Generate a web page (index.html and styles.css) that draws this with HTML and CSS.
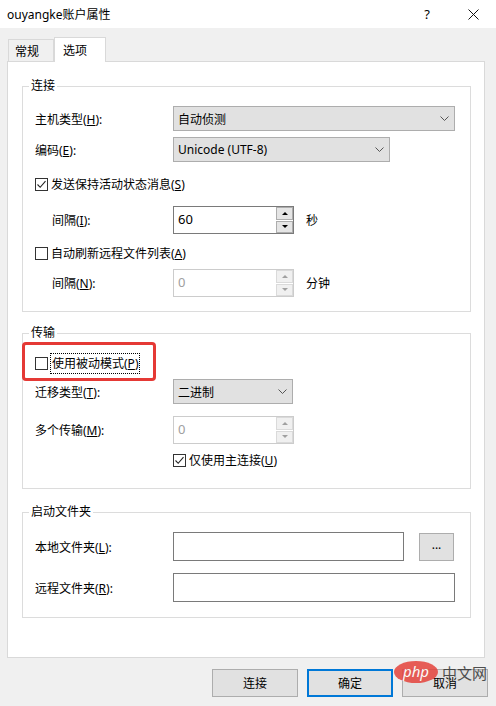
FILE: index.html
```html
<!DOCTYPE html>
<html lang="zh-CN">
<head>
  <meta charset="UTF-8" />
  <title>ouyangke账户属性</title>
  <link rel="stylesheet" href="styles.css">
</head>
<body>

<div class="titlebar">
  <span class="title">ouyangke账户属性</span>
  <span class="help">?</span>
  <span class="close">
    <svg width="11" height="11" viewBox="0 0 11 11"><path d="M0.5 0.5 L10.5 10.5 M10.5 0.5 L0.5 10.5" stroke="#111" stroke-width="1" fill="none"/></svg>
  </span>
</div>

<div class="dialog">
  <div class="tabs">
    <div class="tab">常规</div>
    <div class="tab active">选项</div>
  </div>

  <div class="panel">

    <fieldset class="group">
      <legend>连接</legend>

      <div class="row gap-l">
        <span class="lbl">主机类型(<u>H</u>):</span>
        <div class="select wide">
          <span>自动侦测</span>
          <svg class="chev" width="9" height="5" viewBox="0 0 9 5"><path d="M0.5 0.5 L4.5 4.5 L8.5 0.5" stroke="#555" fill="none"/></svg>
        </div>
      </div>

      <div class="row gap-s">
        <span class="lbl">编码(<u>E</u>):</span>
        <div class="select mid">
          <span>Unicode (UTF-8)</span>
          <svg class="chev" width="9" height="5" viewBox="0 0 9 5"><path d="M0.5 0.5 L4.5 4.5 L8.5 0.5" stroke="#555" fill="none"/></svg>
        </div>
      </div>

      <div class="row gap-l">
        <span class="check">
          <span class="box"><svg width="11" height="11" viewBox="0 0 11 11"><path d="M1.5 5.5 L4.2 8.3 L9.5 2.2" stroke="#222" stroke-width="1.1" fill="none"/></svg></span>
          <span>发送保持活动状态消息(<u>S</u>)</span>
        </span>
      </div>

      <div class="row indent gap-l">
        <span class="lbl">间隔(<u>I</u>):</span>
        <div class="spin">
          <span class="val">60</span>
          <span class="arrows">
            <span class="arr"><i class="up"></i></span>
            <span class="arr"><i class="down"></i></span>
          </span>
        </div>
        <span class="unit">秒</span>
      </div>

      <div class="row gap-m">
        <span class="check">
          <span class="box"></span>
          <span>自动刷新远程文件列表(<u>A</u>)</span>
        </span>
      </div>

      <div class="row indent gap-s">
        <span class="lbl">间隔(<u>N</u>):</span>
        <div class="spin off">
          <span class="val">0</span>
          <span class="arrows">
            <span class="arr"><i class="up"></i></span>
            <span class="arr"><i class="down"></i></span>
          </span>
        </div>
        <span class="unit">分钟</span>
      </div>
    </fieldset>

    <fieldset class="group transfer">
      <legend>传输</legend>

      <div class="row gap-l">
        <span class="check mark">
          <span class="box"></span>
          <span class="focus">使用被动模式(<u>P</u>)</span>
        </span>
      </div>

      <div class="row gap-s">
        <span class="lbl">迁移类型(<u>T</u>):</span>
        <div class="select short">
          <span>二进制</span>
          <svg class="chev" width="9" height="5" viewBox="0 0 9 5"><path d="M0.5 0.5 L4.5 4.5 L8.5 0.5" stroke="#555" fill="none"/></svg>
        </div>
      </div>

      <div class="row gap-l">
        <span class="lbl">多个传输(<u>M</u>):</span>
        <div class="spin off">
          <span class="val">0</span>
          <span class="arrows">
            <span class="arr"><i class="up"></i></span>
            <span class="arr"><i class="down"></i></span>
          </span>
        </div>
      </div>

      <div class="row gap-s">
        <span class="check push">
          <span class="box"><svg width="11" height="11" viewBox="0 0 11 11"><path d="M1.5 5.5 L4.2 8.3 L9.5 2.2" stroke="#222" stroke-width="1.1" fill="none"/></svg></span>
          <span>仅使用主连接(<u>U</u>)</span>
        </span>
      </div>
    </fieldset>

    <fieldset class="group startup">
      <legend>启动文件夹</legend>

      <div class="row gap-l">
        <span class="lbl">本地文件夹(<u>L</u>):</span>
        <div class="field local"></div>
        <button class="browse">...</button>
      </div>

      <div class="row gap-l">
        <span class="lbl">远程文件夹(<u>R</u>):</span>
        <div class="field remote"></div>
      </div>
    </fieldset>

  </div>

  <div class="actions">
    <button class="btn">连接</button>
    <button class="btn default">确定</button>
    <button class="btn">取消</button>
  </div>
</div>

<div class="watermark">
  <span class="php">php</span>
  <span class="cn">中文网</span>
</div>

</body>
</html>
```

FILE: styles.css
```css
body {
  margin: 0;
  width: 496px;
  height: 706px;
  overflow: hidden;
  background: #f0f0f0;
  color: #000;
  font-family: "Noto Sans", "Noto Sans CJK SC", sans-serif;
  font-size: 12px;
  position: relative;
}
u {
  text-decoration: underline;
  text-underline-offset: 1px;
}

/* title bar */
.titlebar {
  height: 28px;
  background: #fff;
  display: flex;
  align-items: center;
}
.title {
  flex: 1;
  padding-left: 7px;
  font-size: 12px;
}
.help {
  width: 46px;
  text-align: center;
  font-size: 13px;
}
.close {
  width: 46px;
  height: 28px;
  display: flex;
  align-items: center;
  justify-content: center;
}

/* tabs */
.tabs {
  height: 33px;
  display: flex;
  align-items: flex-end;
  padding-left: 8px;
}
.tab {
  height: 22px;
  box-sizing: border-box;
  border: 1px solid #d9d9d9;
  border-bottom: none;
  padding: 2px 0 0 6px;
  width: 46px;
  background: #f0f0f0;
}
.tab.active {
  height: 25px;
  width: 52px;
  margin-bottom: -1px;
  background: #fff;
  padding: 3px 0 0 8px;
  position: relative;
  z-index: 1;
}

/* main panel */
.panel {
  height: 597px;
  box-sizing: border-box;
  margin: 0 11px 0 7px;
  background: #fff;
  border: 1px solid #d9d9d9;
  padding-top: 16px;
}
.group {
  margin: 0 13px 0 14px;
  padding: 0 12px 14px;
  border: 1px solid #dcdcdc;
  min-width: 0;
}
.group legend {
  line-height: 16px;
  padding: 0 2px;
  margin-left: -6px;
}
.group.transfer {
  margin-top: 13px;
  padding-bottom: 18px;
}
.group.startup {
  margin-top: 15px;
  padding-bottom: 15px;
}

.row {
  display: flex;
  align-items: center;
}
.gap-s { margin-top: 6px; }
.gap-m { margin-top: 9px; }
.gap-l { margin-top: 12px; }

.lbl {
  width: 138px;
  flex: none;
}
.indent .lbl {
  margin-left: 17px;
  width: 121px;
}

/* checkboxes */
.check {
  display: flex;
  align-items: center;
  gap: 3px;
  height: 20px;
  position: relative;
}
.check.push {
  margin-left: 138px;
}
.box {
  width: 13px;
  height: 13px;
  box-sizing: border-box;
  border: 1px solid #333;
  background: #fff;
  display: flex;
  align-items: center;
  justify-content: center;
}
.focus {
  outline: 1px dotted #000;
  padding: 1px 1px;
  line-height: 17px;
}
.check.mark::after {
  content: "";
  position: absolute;
  left: -13px;
  top: -11px;
  width: 134px;
  height: 39px;
  box-sizing: border-box;
  border: 3px solid #e53935;
  border-radius: 4px;
}

/* dropdowns */
.select {
  height: 25px;
  box-sizing: border-box;
  border: 1px solid #adadad;
  background: #e1e1e1;
  display: flex;
  align-items: center;
  justify-content: space-between;
  padding: 0 5px 0 4px;
}
.select.wide { width: 282px; }
.select.mid { width: 217px; }
.select.short { width: 120px; }

/* spin boxes */
.spin {
  width: 121px;
  height: 28px;
  box-sizing: border-box;
  border: 1px solid #7a7a7a;
  background: #fff;
  display: flex;
  justify-content: space-between;
}
.spin .val {
  padding: 3px 0 0 4px;
  font-size: 13px;
}
.arrows {
  width: 17px;
  display: flex;
  flex-direction: column;
  gap: 1px;
  padding: 0;
}
.arr {
  flex: 1;
  border: 1px solid #adadad;
  background: #e5e5e5;
  display: flex;
  align-items: center;
  justify-content: center;
}
.arr i {
  width: 0;
  height: 0;
  border-left: 3px solid transparent;
  border-right: 3px solid transparent;
}
.arr .up { border-bottom: 3px solid #000; }
.arr .down { border-top: 3px solid #000; }

.spin.off {
  border-color: #cccccc;
}
.spin.off .val {
  color: #a0a0a0;
}
.spin.off .arr {
  border-color: #dadada;
  background: #f0f0f0;
}
.spin.off .up { border-bottom-color: #a0a0a0; }
.spin.off .down { border-top-color: #a0a0a0; }

.unit {
  margin-left: 12px;
}

/* folder inputs */
.field {
  height: 29px;
  box-sizing: border-box;
  border: 1px solid #7a7a7a;
  background: #fff;
}
.field.local { width: 231px; }
.field.remote { width: 282px; }
.browse {
  margin-left: 15px;
  width: 35px;
  height: 28px;
  border: 1px solid #adadad;
  background: #e1e1e1;
  font: inherit;
  padding: 0 0 4px;
}

/* dialog buttons */
.actions {
  display: flex;
  justify-content: flex-end;
  gap: 9px;
  padding: 11px 8px 0;
}
.btn {
  width: 86px;
  height: 28px;
  border: 1px solid #adadad;
  background: #e1e1e1;
  font: inherit;
  color: #000;
}
.btn.default {
  border: 2px solid #0078d7;
}

/* site watermark over the corner */
.watermark {
  position: absolute;
  left: 394px;
  top: 661px;
  display: flex;
  align-items: center;
  gap: 4px;
  opacity: 0.85;
}
.php {
  width: 44px;
  height: 22px;
  border-radius: 50%;
  background: #e5433c;
  color: #fff;
  font-style: italic;
  font-size: 15px;
  line-height: 21px;
  text-align: center;
}
.cn {
  font-size: 15px;
  color: #333;
}
```
